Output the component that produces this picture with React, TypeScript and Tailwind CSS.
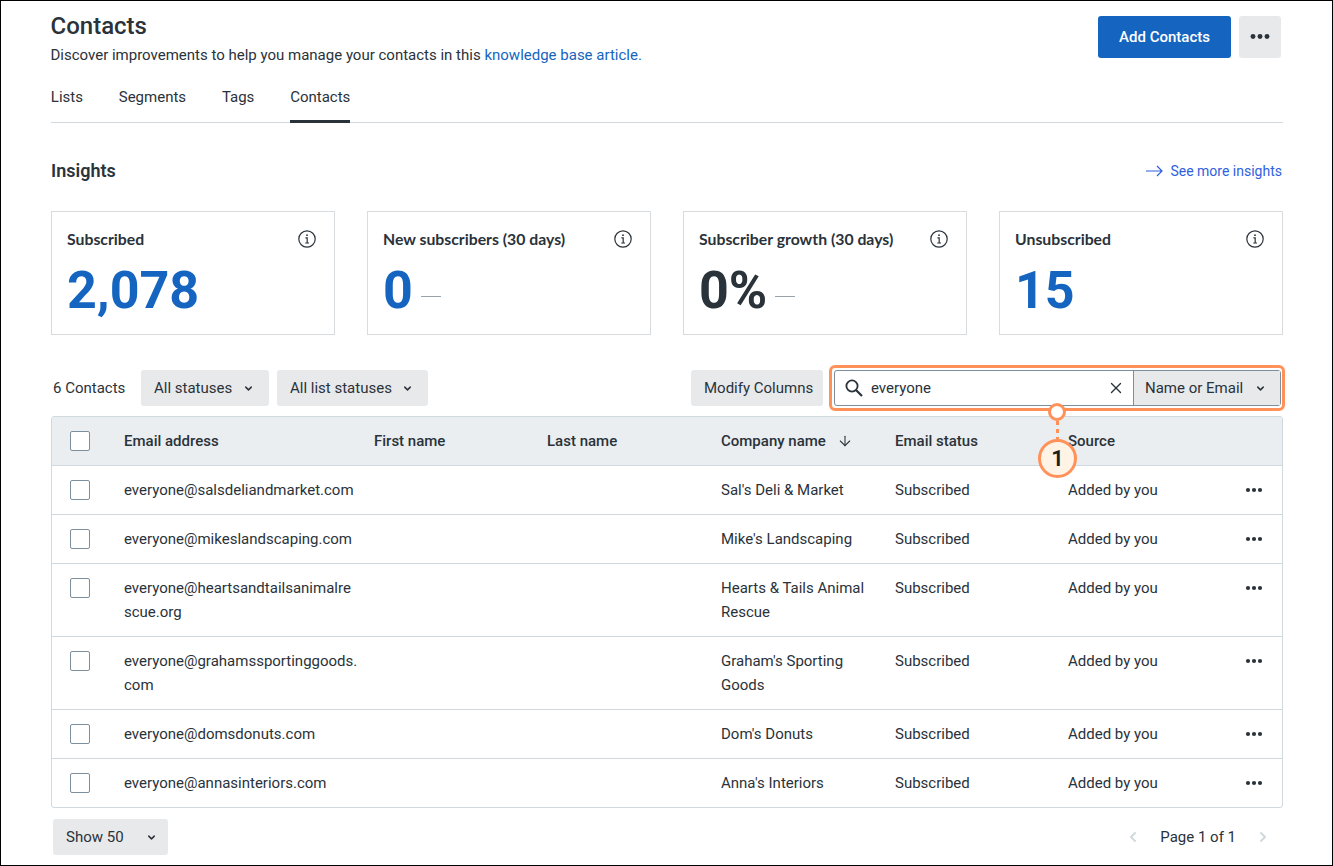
import { ArrowDown, ChevronDown, ChevronLeft, ChevronRight, X } from "lucide-react";

const insights = [
  { title: "Subscribed", value: "2,078", color: "text-[#1565c0]", dash: false },
  { title: "New subscribers (30 days)", value: "0", color: "text-[#1565c0]", dash: true },
  { title: "Subscriber growth (30 days)", value: "0%", color: "text-[#2a323a]", dash: true },
  { title: "Unsubscribed", value: "15", color: "text-[#1565c0]", dash: false },
];

const contacts = [
  { email: "everyone@salsdeliandmarket.com", company: "Sal's Deli & Market" },
  { email: "everyone@mikeslandscaping.com", company: "Mike's Landscaping" },
  { email: "everyone@heartsandtailsanimalrescue.org", company: "Hearts & Tails Animal Rescue" },
  { email: "everyone@grahamssportinggoods.com", company: "Graham's Sporting Goods" },
  { email: "everyone@domsdonuts.com", company: "Dom's Donuts" },
  { email: "everyone@annasinteriors.com", company: "Anna's Interiors" },
];

function Dots({ big }: { big?: boolean }) {
  return (
    <svg width={big ? 22 : 18} height={big ? 7 : 6} viewBox="0 0 18 6" fill="#2a323a">
      <circle cx="3" cy="3" r="2.1" />
      <circle cx="9" cy="3" r="2.1" />
      <circle cx="15" cy="3" r="2.1" />
    </svg>
  );
}

function InfoIcon() {
  return (
    <svg width="18" height="18" viewBox="0 0 18 18" fill="none" stroke="#2a323a">
      <circle cx="9" cy="9" r="8.2" strokeWidth="1.2" />
      <circle cx="9" cy="5.2" r="0.9" fill="#2a323a" stroke="none" />
      <path d="M7.4 7.8H9.2V12.9M7.3 13H11" strokeWidth="1.2" />
    </svg>
  );
}

function SearchIcon() {
  return (
    <svg width="18" height="18" viewBox="0 0 18 18" fill="none" stroke="#2a323a" className="-mt-px">
      <circle cx="7" cy="7" r="5.6" strokeWidth="1.8" />
      <path d="M11 11L17 17" strokeWidth="2.2" />
    </svg>
  );
}

function Checkbox() {
  return <div className="h-5 w-5 rounded-[2px] border border-[#7d8f9c] bg-white" />;
}

function Select({ label, className }: { label: string; className: string }) {
  return (
    <div className={`flex h-9 items-center justify-between rounded-[3px] bg-[#e8e9eb] pt-px text-[15px] text-[#2a323a] ${className}`}>
      <span>{label}</span>
      <ChevronDown size={11} strokeWidth={3.2} />
    </div>
  );
}

export default function App() {
  return (
    <div className="h-[866px] w-[1333px] overflow-hidden border border-black bg-white pl-[50px] pr-[49px] font-['Roboto',sans-serif] text-[#2a323a]">
      <div className="flex items-start justify-between">
        <div className="-ml-[0.5px]">
          <h1 className="mt-[10px] text-[24px] font-medium leading-[30px]">Contacts</h1>
          <p className="mt-[4px] text-[15px] leading-[20px]">
            Discover improvements to help you manage your contacts in this{" "}
            <span className="text-[#1565c0]">knowledge base article.</span>
          </p>
        </div>
        <div className="mr-[2px] mt-[15px] flex gap-2">
          <div className="flex h-[42px] w-[133px] items-center justify-center rounded-[3px] bg-[#1565c0] pt-px text-[15px] font-medium text-white">
            Add Contacts
          </div>
          <div className="flex h-[42px] w-[42px] items-center justify-center rounded-[3px] bg-[#e8e9eb] pb-[2px]">
            <Dots big />
          </div>
        </div>
      </div>

      <div className="mt-[9px] flex h-[49px] gap-9 border-b border-[#d0d9de] text-[15px]">
        {["Lists", "Segments", "Tags", "Contacts"].map((tab) => (
          <div
            key={tab}
            className={`-ml-[0.2px] h-[49px] pt-[13px] leading-[20px] ${tab === "Contacts" ? "border-b-[3px] border-[#2a323a]" : ""}`}
          >
            {tab}
          </div>
        ))}
      </div>

      <div className="mt-[36px] flex items-center justify-between">
        <h2 className="text-[18px] font-semibold leading-6">Insights</h2>
        <div className="mr-px flex items-center gap-[7px] text-[14px] text-[#2f5fe0]">
          <svg width="17" height="12" viewBox="0 0 17 12" fill="none" stroke="#2f5fe0" strokeWidth="1.2">
            <path d="M0 6H16M11 1L16 6L11 11" />
          </svg>
          See more insights
        </div>
      </div>

      <div className="mt-[28px] grid grid-cols-4 gap-8">
        {insights.map((card) => (
          <div key={card.title} className="h-[124px] border border-[#d9dcde] px-[15px] pt-[16px]">
            <div className="flex items-center justify-between pr-[3px] font-['Lato',sans-serif] text-[15.8px] font-bold leading-[22px]">
              {card.title}
              <InfoIcon />
            </div>
            <div className="mt-[11px] flex items-center gap-[8px]">
              <span className={`text-[52px] font-bold leading-[60px] ${card.color}`}>{card.value}</span>
              {card.dash && <span className="mt-[10px] h-px w-5 bg-[#9aa3aa]" />}
            </div>
          </div>
        ))}
      </div>

      <div className="mt-[35px] flex items-center">
        <span className="ml-[2px] w-[88px] text-[15px]">6 Contacts</span>
        <Select label="All statuses" className="w-[128px] pl-[13px] pr-[15px]" />
        <Select label="All list statuses" className="ml-2 w-[151px] pl-[13px] pr-[15px]" />
        <div className="ml-[263px] flex h-9 w-[132px] items-center rounded-[3px] bg-[#e8e9eb] pl-[13px] pt-px text-[15px]">
          Modify Columns
        </div>
        <div className="relative ml-[11px] flex h-9 w-[447px] rounded-[3px] border border-[#7d8f9c]">
          <div className="flex flex-1 items-center pl-[10px] pr-[8px] text-[15px]">
            <SearchIcon />
            <span className="ml-[8px] flex-1">everyone</span>
            <X size={18} strokeWidth={1.8} />
          </div>
          <div className="flex w-[147px] items-center justify-between border-l border-[#7d8f9c] bg-[#e8e9eb] pl-[11px] pr-[14px] pt-px text-[15px]">
            Name or Email
            <ChevronDown size={11} strokeWidth={3.2} />
          </div>
          {/* callout drawn over the search box */}
          <div className="pointer-events-none absolute -bottom-[6px] -left-[6px] -right-[5px] -top-[6px] rounded-[6px] border-[3px] border-[#ff9159]" />
          <div className="absolute left-[213px] top-[32px] h-[18px] w-[18px] rounded-full border-[3px] border-[#ff9159] bg-white" />
          <div className="absolute left-[221px] top-[50px] h-[18px] w-[3px] bg-[repeating-linear-gradient(to_bottom,#ff9159_0,#ff9159_4px,transparent_4px,transparent_8px)]" />
          <div className="absolute left-[203px] top-[68px] z-10 flex h-[39px] w-[39px] items-center justify-center rounded-full border-[3px] border-[#ff9159] bg-[#fff3e6] text-[22px] font-semibold text-[#1d1d1d]">
            1
          </div>
        </div>
      </div>

      <div className="mt-[10px] overflow-hidden rounded-[3px] border border-[#d0d9de]">
        <table className="w-full table-fixed text-left text-[15px]">
          <thead className="bg-[#ebeef0]">
            <tr className="h-[48px] border-b border-[#d0d9de]">
              <th className="w-[72px] pl-[18px] font-medium">
                <Checkbox />
              </th>
              <th className="w-[250px] font-medium">Email address</th>
              <th className="w-[173px] font-medium">First name</th>
              <th className="w-[174px] font-medium">Last name</th>
              <th className="w-[174px] font-medium">
                <span className="flex items-center gap-[11px]">
                  Company name <ArrowDown size={16} strokeWidth={1.6} />
                </span>
              </th>
              <th className="w-[173px] font-medium">Email status</th>
              <th className="w-[177px] font-medium">Source</th>
              <th className="font-medium" />
            </tr>
          </thead>
          <tbody>
            {contacts.map((contact) => (
              <tr key={contact.email} className="border-b border-[#d0d9de] align-top last:border-b-0">
                <td className="pb-[14px] pl-[18px] pt-[14px]">
                  <Checkbox />
                </td>
                <td className="break-all pb-[12px] pr-[16px] pt-[12px] leading-6">{contact.email}</td>
                <td />
                <td />
                <td className="pb-[12px] pr-[16px] pt-[12px] leading-6">{contact.company}</td>
                <td className="pb-[12px] pt-[12px] leading-6">Subscribed</td>
                <td className="pb-[12px] pt-[12px] leading-6">Added by you</td>
                <td className="pt-[21px]">
                  <Dots />
                </td>
              </tr>
            ))}
          </tbody>
        </table>
      </div>

      <div className="mt-[11px] flex items-center justify-between">
        <Select label="Show 50" className="ml-[2px] w-[115px] pl-[13px] pr-[11px]" />
        <div className="mr-[12px] flex items-center gap-[19px] pt-px text-[15px]">
          <ChevronLeft size={16} strokeWidth={3} className="text-[#d0d9de]" />
          Page 1 of 1
          <ChevronRight size={16} strokeWidth={3} className="text-[#d0d9de]" />
        </div>
      </div>
    </div>
  );
}
